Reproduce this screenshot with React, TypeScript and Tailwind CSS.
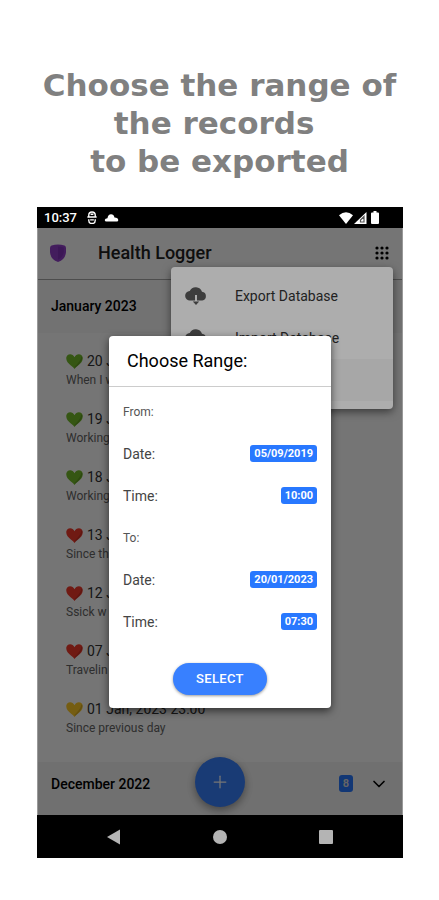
import { ChevronDown, Plus } from "lucide-react";

interface Entry {
  date: string;
  note: string;
  heart: string;
}

const GREEN = "text-[#74bc2a]";
const RED = "text-[#f53a2c]";
const YELLOW = "text-[#ffcc28]";

const entries: Entry[] = [
  { date: "20 Jan", note: "When I w", heart: GREEN },
  { date: "19 Jan", note: "Working", heart: GREEN },
  { date: "18 Jan", note: "Working", heart: GREEN },
  { date: "13 Jan", note: "Since th", heart: RED },
  { date: "12 Jan", note: "Ssick w", heart: RED },
  { date: "07 Jan", note: "Travelin", heart: RED },
  { date: "01 Jan, 2023 23:00", note: "Since previous day", heart: YELLOW },
];

const range = [
  { title: "From:", date: "05/09/2019", time: "10:00" },
  { title: "To:", date: "20/01/2023", time: "07:30" },
];

function Heart({ className }: { className: string }) {
  return (
    <svg viewBox="0 0 18 16" className={`h-[15px] w-[17px] ${className}`} aria-hidden="true">
      <path
        fill="currentColor"
        d="M9 16C7.500 13.600 3.500 11.500 1.600 8.800C-.2 6.200-.3 3 1.500 1.300C3.600-.6 7.600 0 9 3.400C10.400 0 14.400-.6 16.500 1.300C18.300 3 18.200 6.200 16.400 8.800C14.500 11.500 10.500 13.600 9 16Z"
      />
      <path fill="none" stroke="black" strokeOpacity="0.150" strokeWidth="1.500" d="M16.800 3C17.200 7.500 13 10.500 9.300 14.500" />
    </svg>
  );
}

function CloudIcon({ up }: { up?: boolean }) {
  return (
    <svg viewBox="0 0 22 20" className="h-5 w-[22px] shrink-0" aria-hidden="true">
      <path
        fill="#5a5a5a"
        d="M5 14.500A4.700 4.700 0 0 1 4.700 5.100A6.600 6.600 0 0 1 17 5.800A4.400 4.400 0 0 1 17.300 14.500H12V9H10V14.500Z"
      />
      <path fill="#5a5a5a" d={up ? "M11 9L14.500 13H7.500Z" : "M11 19L7.800 15.500H14.200Z"} />
    </svg>
  );
}

function StatusBar() {
  return (
    <div className="flex h-[21px] items-center bg-black px-[7px] text-white">
      <span className="text-[13px] font-medium">10:37</span>
      <svg viewBox="0 0 12 14" className="ml-[9px] h-[13px] w-3" fill="none" stroke="currentColor" strokeWidth="1.500">
        <path d="M2.500 6V4.500A3.500 3.500 0 0 1 9.500 4.500V6M1 6.500H11M2.500 9V10A3.500 3.500 0 0 0 9.500 10V9M4 9.500H8M4.500 3.500H7.500" />
      </svg>
      <svg viewBox="0 0 16 10" className="ml-[6px] h-[9px] w-[15px]" fill="currentColor">
        <path d="M2.500 9.500Q.5 9.500 .5 7.800Q.8 5.800 3.500 5.800Q4.200 1.500 7.500 1.500Q10.500 1.500 11.300 5Q15.500 5.200 15.500 8Q15.500 9.500 14 9.500Z" />
      </svg>
      <div className="mr-[17px] ml-auto flex items-center">
        <svg viewBox="0 0 14 12" className="h-3 w-[14px]" fill="currentColor">
          <path d="M0 3.200Q7-2.500 14 3.200L7 12Z" />
        </svg>
        <svg viewBox="0 0 13 12" className="ml-px h-3 w-[13px]">
          <path d="M0 12L12.500 0V12Z" fill="white" />
          <path d="M6.500 10V8L10 4.500V10Z" fill="none" stroke="#555" strokeWidth="1.200" />
        </svg>
        <svg viewBox="0 0 8 13" className="ml-1 h-[13px] w-2" fill="currentColor">
          <path d="M2.500 0H5.500V1.500H7Q8 1.500 8 2.500V12Q8 13 7 13H1Q0 13 0 12V2.500Q0 1.500 1 1.500H2.500Z" />
        </svg>
      </div>
    </div>
  );
}

function Header() {
  return (
    <header className="flex h-[52px] items-center border-b border-[#a8a8a8] px-3 pb-[2px]">
      <svg viewBox="0 0 16 18" className="h-[18px] w-4" aria-hidden="true">
        <path fill="#9440cc" d="M1.500 1.500Q8-.5 14.500 1.500Q16 2 16 4V8Q15.500 15.500 8 18Q.5 15.500 0 8V4Q0 2 1.500 1.500Z" />
        <path fill="#8434bc" d="M8 2.500Q11 2.500 13.800 3.500V8Q13 13.500 8 15.800Z" />
      </svg>
      <h2 className="ml-8 text-lg font-medium text-[#222]">Health Logger</h2>
      <button className="ml-auto" aria-label="Menu">
        <svg viewBox="0 0 16 16" className="h-4 w-4" fill="black">
          {[3, 8, 13].map((y) => [3, 8, 13].map((x) => <circle key={`${x}-${y}`} cx={x} cy={y} r="1.600" />))}
        </svg>
      </button>
    </header>
  );
}

function Menu() {
  return (
    <ul className="absolute top-[39px] right-[9px] w-[61%] rounded-sm bg-white py-2 text-sm text-[#333] shadow-[0_3px_8px_rgba(0,0,0,0.5)]">
      <li>
        <button className="flex h-[42px] w-full items-center gap-7 px-[14px]">
          <CloudIcon />
          Export Database
        </button>
      </li>
      <li>
        <button className="flex h-[42px] w-full items-center gap-7 px-[14px]">
          <CloudIcon up />
          Import Database
        </button>
      </li>
      <li className="h-[42px] bg-[#f6f6f6]" />
    </ul>
  );
}

function PickerRow({ label, value }: { label: string; value: string }) {
  return (
    <div className="flex h-[42px] items-center justify-between text-sm text-[#444]">
      <span>{label}</span>
      <button
        aria-label={`${label} ${value}`}
        className="h-[17px] rounded-[3px] bg-[#2878ff] px-1 text-[11px] leading-[17px] font-bold text-white"
      >
        {value}
      </button>
    </div>
  );
}

function RangeDialog() {
  return (
    <div
      role="dialog"
      aria-labelledby="range-title"
      className="w-[61%] rounded-sm bg-white pb-[13px] shadow-[0_3px_8px_rgba(0,0,0,0.6)]"
    >
      <h3 id="range-title" className="border-b border-[#ccc] px-[18px] text-lg leading-[50px] text-black">
        Choose Range:
      </h3>
      <div className="px-[14px] pt-1">
        {range.map((item) => (
          <section key={item.title}>
            <h4 className="text-xs leading-[42px] text-[#555]">{item.title}</h4>
            <PickerRow label="Date:" value={item.date} />
            <PickerRow label="Time:" value={item.time} />
          </section>
        ))}
      </div>
      <button className="mx-auto mt-5 block h-8 rounded-full bg-[#3880ff] px-[23px] text-[13px] font-medium tracking-wide text-white shadow-[0_1px_3px_rgba(0,0,0,0.4)]">
        SELECT
      </button>
    </div>
  );
}

export default function App() {
  return (
    <main className="bg-white pt-[66px] pb-[42px] font-[Roboto,sans-serif]">
      <h1 className="text-center font-['DejaVu_Sans',sans-serif] text-[31px] leading-[38px] font-bold whitespace-pre text-[#808080]">
        {"Choose the range of\nthe records \nto be exported"}
      </h1>

      <div className="mt-[27px] mr-9 ml-[37px]">
        <StatusBar />

        <div className="relative overflow-hidden border-x border-[#999] bg-white">
          <Header />

          <h3 className="bg-[#f8f8f8] px-[13px] text-sm leading-[53px] font-medium text-black">January 2023</h3>
          <ul className="px-7 pt-2 pb-[15px]">
            {entries.map((entry) => (
              <li key={entry.date} className="flex h-[58px] flex-col justify-center">
                <div className="flex items-center gap-1 text-sm leading-5 text-[#333]">
                  <Heart className={entry.heart} />
                  {entry.date}
                </div>
                <p className="text-xs leading-[18px] text-[#666]">{entry.note}</p>
              </li>
            ))}
          </ul>
          <div className="flex h-[53px] items-center bg-[#f4f4f4] px-[13px] pb-[10px] text-black">
            <h3 className="text-sm font-medium">December 2022</h3>
            <span className="ml-auto rounded-[3px] bg-[#2878ff] px-1 text-[11px] leading-[17px] font-bold text-[#ddd]">
              8
            </span>
            <button className="ml-4" aria-label="Expand">
              <ChevronDown size={20} />
            </button>
          </div>

          <button
            aria-label="Add"
            className="absolute bottom-2 left-1/2 flex h-[50px] w-[50px] -translate-x-1/2 items-center justify-center rounded-full bg-[#3880ff] text-white shadow-[0_3px_8px_rgba(0,0,0,0.4)]"
          >
            <Plus size={20} strokeWidth={1.5} />
          </button>

          <div className="absolute inset-0 bg-black/32" />
          <Menu />
          <div className="absolute inset-0 flex items-center justify-center bg-black/32">
            <RangeDialog />
          </div>
        </div>

        <nav className="flex h-[43px] items-center bg-black px-[70px] text-[#b4b4b4]">
          <button aria-label="Back">
            <svg viewBox="0 0 14 16" className="h-4 w-[13px]" fill="currentColor">
              <path d="M0 8L14 0V16Z" />
            </svg>
          </button>
          <button aria-label="Home" className="mx-auto h-[14px] w-[14px] rounded-full bg-[#b4b4b4]" />
          <button aria-label="Recent" className="h-[14px] w-[14px] rounded-[1px] bg-[#b4b4b4]" />
        </nav>
      </div>
    </main>
  );
}
